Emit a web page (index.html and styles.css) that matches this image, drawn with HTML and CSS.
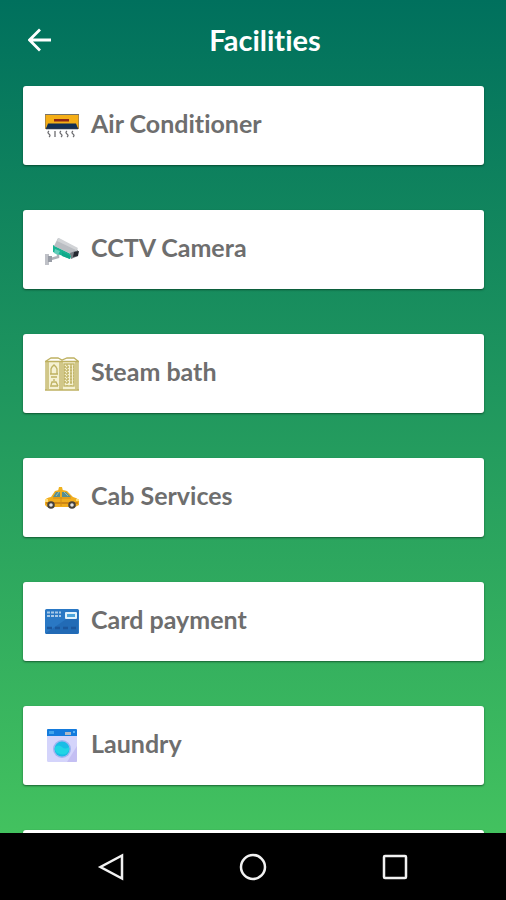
FILE: index.html
```html
<!DOCTYPE html>
<html lang="en">
<head>
<meta charset="utf-8">
<meta name="viewport" content="width=device-width, initial-scale=1">
<title>Facilities</title>
<link rel="stylesheet" href="styles.css">
</head>
<body>
<div class="screen">
  <header class="app-bar">
    <button class="back" type="button" aria-label="Back">
      <svg viewBox="0 0 24 24"><path d="M23 12H2M12 1.500L1.500 12L12 22.500" fill="none" stroke="#fff" stroke-width="2.800"/></svg>
    </button>
    <h1 class="title">Facilities</h1>
  </header>
  <main class="content">
    <ul class="facilities">
      <li class="card">
        <svg class="icon" viewBox="0 0 36 36">
          <rect x="1" y="6" width="34" height="15" rx="1" fill="#f5ae16"/>
          <path d="M1 6.500H35" stroke="#77736b" stroke-width="1.200"/>
          <path d="M1.500 7V21M34.500 7V21" stroke="#b58a3c"/>
          <rect x="10" y="11" width="15" height="2.500" fill="#8f2614"/>
          <path d="M4 15.500H32L34 20.500H2Z" fill="#122f55"/>
          <path d="M2 20.500H34" stroke="#26344b" stroke-width="1.500"/>
          <path d="M5 23q-2 1.500 0 3t0 3M11 23v6M17 23q-2 1.500 0 3t0 3M23 23q-2 1.500 0 3t0 3M29 23q-2 1.500 0 3t0 3" fill="none" stroke="#6c6c70" stroke-width="1.300"/>
        </svg>
        <span>Air Conditioner</span>
      </li>
      <li class="card">
        <svg class="icon" viewBox="0 0 36 36">
          <path d="M14 21V25L7 27" fill="none" stroke="#aeb1b7" stroke-width="2.500"/>
          <rect x="1" y="22" width="4" height="11" fill="#bfc1c7"/>
          <rect x="4" y="24" width="4" height="6" fill="#989ca5"/>
          <path d="M9 13L27 22L26 27L9 20Z" fill="#18b392"/>
          <path d="M14 6L34 17L27 22L10 14Z" fill="#babdc2"/>
          <path d="M15 6L34 16L32 18L13 9Z" fill="#d1d3d6"/>
          <path d="M26 21L34 18V24L27 27Z" fill="#777c83"/>
          <path d="M30 20L35 19L34 24L29 25Z" fill="#252830"/>
          <path d="M11 17L16 19L14 23L10 21Z" fill="#61cdb9"/>
          <path d="M18 20L27 24L26 27L18 24Z" fill="#0fa98a"/>
        </svg>
        <span>CCTV Camera</span>
      </li>
      <li class="card">
        <svg class="icon" viewBox="0 0 36 36">
          <rect x="2" y="5" width="32" height="29" fill="#f5f1d2"/>
          <g fill="none" stroke="#beb161" stroke-width="1.300">
            <path d="M2 34V5L7 2H14L18 4L23 2H30L34 5V34ZM1 5.500H35M4 6V33M16 6V34M18 6V34M32 6V33M1 34H35"/>
            <path d="M7 18V13L8 11L10 9L12 11L13 13V18M6 18H14M7 21H13M10 23v2M6 30H14M7 29L8 26H12L14 30"/>
            <rect x="20" y="8" width="10" height="22"/>
            <path d="M20 11H30M20 14H30M20 17H30M20 20H30M20 23H30M20 26H30M23 8V30M27 8V30" stroke-dasharray="2 1"/>
          </g>
        </svg>
        <span>Steam bath</span>
      </li>
      <li class="card">
        <svg class="icon" viewBox="0 0 36 36">
          <path d="M14 11L15 7H18L19 11Z" fill="#f0b21e"/>
          <path d="M1 25V20Q2 18 7 17L11 11Q17 9 23 11L29 17Q34 18 35 21V25L31 27H3Z" fill="#f1ad1d"/>
          <path d="M9 17L12 12H16V17ZM18 17V12H22L27 17Z" fill="#578e91"/>
          <path d="M12 16L15 12M20 12L24 16" stroke="#9cbbb1"/>
          <path d="M2 23H34" stroke="#cd8615" stroke-width="2"/>
          <path d="M17 17V26M9 18H27" stroke="#d48d17"/>
          <path d="M1 19H4V22H1ZM32 19H35V21H32Z" fill="#ffdd78"/>
          <g fill="#e3e2df" stroke="#46423c" stroke-width="2"><circle cx="7" cy="25" r="2.800"/><circle cx="28" cy="25" r="2.800"/></g>
        </svg>
        <span>Cab Services</span>
      </li>
      <li class="card">
        <svg class="icon" viewBox="0 0 36 36">
          <rect x="1" y="5" width="34" height="25" rx="1.500" fill="#2a78c4"/>
          <path d="M2 29L34 7V28Q34 30 32 30H2Z" fill="#226bb6"/>
          <path d="M3 8.500H17M3 12H17" stroke="#a8c9e8" stroke-width="2.200" stroke-dasharray="3 1"/>
          <rect x="21" y="8" width="12" height="7" rx="1" fill="#e2f2fb"/>
          <rect x="23" y="10" width="8" height="3" fill="#4da5dc"/>
          <path d="M3 24H33" stroke="#1b569c" stroke-width="2.500" stroke-dasharray="5 3"/>
        </svg>
        <span>Card payment</span>
      </li>
      <li class="card">
        <svg class="icon" viewBox="0 0 36 36">
          <rect x="3" y="1" width="30" height="33" rx="1.500" fill="#d4d4fb"/>
          <path d="M23 34L33 18V33Q33 34 32 34Z" fill="#c4bff3"/>
          <path d="M3 8V2Q3 1 4 1H32Q33 1 33 2V8Z" fill="#147bdd"/>
          <path d="M5 3H10V6H5Z" fill="#43a5ec"/>
          <path d="M21 4H27V7H21Z" fill="#b3b9c3"/>
          <circle cx="30" cy="4" r="1" fill="#73caff"/>
          <circle cx="18" cy="21" r="9" fill="#9eb5f1"/>
          <circle cx="18" cy="21" r="7.500" fill="#19bde6"/>
          <path d="M11 19Q15 16 18 19T25 19Q26 22 23 25T13 25Q10 22 11 19Z" fill="#20d5e5"/>
        </svg>
        <span>Laundry</span>
      </li>
      <li class="card" aria-hidden="true"></li>
    </ul>
  </main>
  <nav class="system-nav" aria-label="System">
    <button type="button" aria-label="Back"><svg viewBox="0 0 28 28"><path d="M25 2.500V25.500L3.500 14Z"/></svg></button>
    <button type="button" aria-label="Home"><svg viewBox="0 0 28 28"><circle cx="14" cy="14" r="12"/></svg></button>
    <button type="button" aria-label="Recent apps"><svg viewBox="0 0 28 28"><rect x="3" y="3" width="22" height="22" rx="1"/></svg></button>
  </nav>
</div>
</body>
</html>
```
FILE: styles.css
```css
* {
  box-sizing: border-box;
}

body {
  margin: 0;
  font-family: Lato, "Liberation Sans", sans-serif;
  font-variant-ligatures: none;
}

button {
  padding: 0;
  border: 0;
  background: none;
}

svg {
  display: block;
}

.screen {
  display: flex;
  flex-direction: column;
  height: 100vh;
  overflow: hidden;
  background: linear-gradient(#00705d, #43c25f 93%);
}

.app-bar {
  display: flex;
  flex: none;
  align-items: center;
  padding: 24px 28px 14px;
}

.back svg {
  width: 24px;
  height: 24px;
}

.title {
  flex: 1;
  margin: 0;
  color: #fff;
  font-size: 29px;
  font-weight: 700;
  line-height: 32px;
  text-align: center;
}

.content {
  flex: 1;
  min-height: 0;
  overflow: hidden;
  padding: 16px 22px 0 23px;
}

.facilities {
  display: grid;
  gap: 45px;
  margin: 0;
  padding: 0;
  list-style: none;
}

.card {
  display: flex;
  align-items: center;
  gap: 11px;
  min-height: 79px;
  padding: 0 21px;
  border-radius: 3px;
  background: #fff;
  box-shadow: 0 1px 2px rgba(0, 40, 20, 0.6);
  color: #6e6e6e;
  font-size: 25px;
  font-weight: 700;
  line-height: 30px;
}

.card span {
  padding-bottom: 6px;
}

.icon {
  flex: none;
  width: 36px;
  height: 36px;
}

.system-nav {
  display: grid;
  flex: none;
  grid-template-columns: repeat(3, 28%);
  justify-content: center;
  padding: 20px 0 19px;
  background: #000;
}

.system-nav button {
  display: grid;
  justify-items: center;
}

.system-nav svg {
  width: 28px;
  height: 28px;
  fill: none;
  stroke: #f2f2f2;
  stroke-width: 2.5;
}
```
